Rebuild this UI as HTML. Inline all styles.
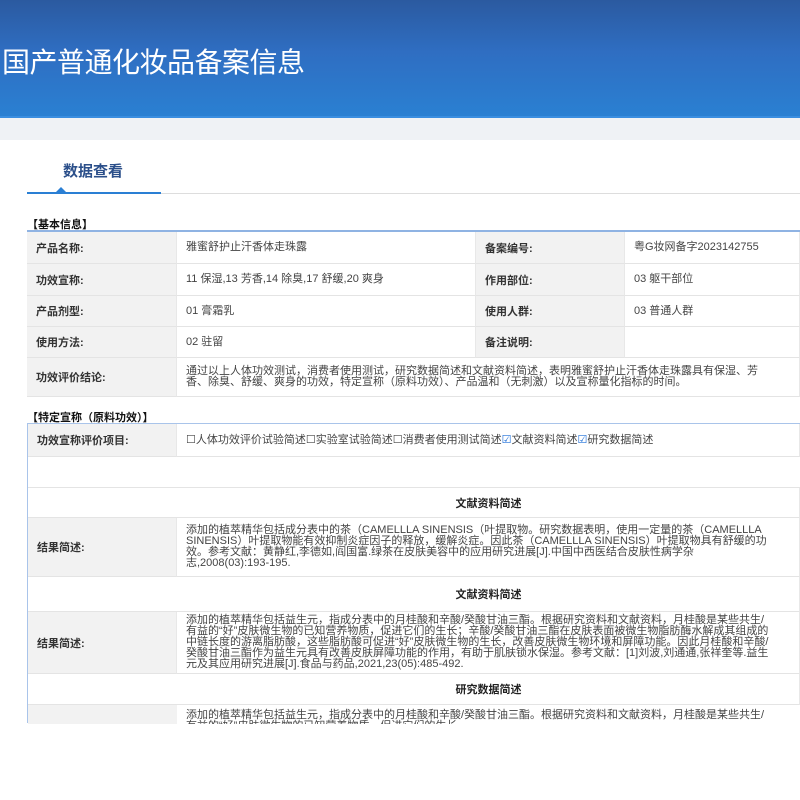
<!DOCTYPE html>
<html><head><meta charset="utf-8"><style>
*{margin:0;padding:0;box-sizing:border-box}
body{width:800px;height:800px;overflow:hidden;background:#fff;font-family:"Liberation Sans","Noto Sans CJK SC",sans-serif;position:relative;color:#333}
.hdr{position:absolute;left:0;top:0;width:800px;height:118px;background:linear-gradient(180deg,#2b5aa0 0%,#2f6ec2 45%,#2a80d2 100%);border-bottom:2px solid #3a8ee0;overflow:hidden}
.hdr h1{position:absolute;left:2px;top:41px;font-size:28px;font-weight:normal;color:#fff;font-family:"Noto Sans CJK SC",sans-serif;letter-spacing:-0.5px}
.band{position:absolute;left:0;top:118px;width:800px;height:22px;background:#eff2f5}
.a{position:absolute}
.tab{left:63px;top:160px;font-size:15px;color:#2b4f8a;font-weight:bold}
.ul1{left:27px;top:192px;width:134px;height:2px;background:#2a7fd4}
.ul2{left:161px;top:193px;width:639px;height:1px;background:#ddd}
.tri{left:56px;top:187px;width:0;height:0;border-left:5px solid transparent;border-right:5px solid transparent;border-bottom:5px solid #2a7fd4}
.sec{font-size:11px;font-weight:bold;color:#111}
.c{position:absolute;font-size:11px;display:flex;align-items:center;border-bottom:1px solid #e4e4e4;border-right:1px solid #e8e8e8}
.l{background:#f2f2f2;font-weight:bold;color:#333;padding-left:9px}
.v{background:#fff;color:#444;padding-left:9px;line-height:11px}
.h{background:#fff;justify-content:center;font-weight:bold;color:#222;padding-left:150px}
</style></head><body>
<div class="hdr"><h1>国产普通化妆品备案信息</h1></div>
<div class="band"></div>
<div class="a tab">数据查看</div>
<div class="a ul2"></div><div class="a ul1"></div><div class="a tri"></div>
<div class="a sec" style="left:27px;top:216px">【基本信息】</div>
<div class="a" style="left:27px;top:230px;width:773px;height:2px;background:#8fb3e3"></div>

<div class="c l" style="left:27px;top:232px;width:150px;height:32px">产品名称:</div>
<div class="c v" style="left:177px;top:232px;width:299px;height:32px">雅蜜舒护止汗香体走珠露</div>
<div class="c l" style="left:476px;top:232px;width:149px;height:32px">备案编号:</div>
<div class="c v" style="left:625px;top:232px;width:175px;height:32px">粤G妆网备字2023142755</div>

<div class="c l" style="left:27px;top:264px;width:150px;height:32px">功效宣称:</div>
<div class="c v" style="left:177px;top:264px;width:299px;height:32px">11 保湿,13 芳香,14 除臭,17 舒缓,20 爽身</div>
<div class="c l" style="left:476px;top:264px;width:149px;height:32px">作用部位:</div>
<div class="c v" style="left:625px;top:264px;width:175px;height:32px">03 躯干部位</div>

<div class="c l" style="left:27px;top:296px;width:150px;height:31px">产品剂型:</div>
<div class="c v" style="left:177px;top:296px;width:299px;height:31px">01 膏霜乳</div>
<div class="c l" style="left:476px;top:296px;width:149px;height:31px">使用人群:</div>
<div class="c v" style="left:625px;top:296px;width:175px;height:31px">03 普通人群</div>

<div class="c l" style="left:27px;top:327px;width:150px;height:31px">使用方法:</div>
<div class="c v" style="left:177px;top:327px;width:299px;height:31px">02 驻留</div>
<div class="c l" style="left:476px;top:327px;width:149px;height:31px">备注说明:</div>
<div class="c v" style="left:625px;top:327px;width:175px;height:31px"></div>

<div class="c l" style="left:27px;top:358px;width:150px;height:39px">功效评价结论:</div>
<div class="c v" style="left:177px;top:358px;width:623px;height:39px;padding-right:30px">通过以上人体功效测试，消费者使用测试，研究数据简述和文献资料简述，表明雅蜜舒护止汗香体走珠露具有保湿、芳香、除臭、舒缓、爽身的功效，特定宣称（原料功效）、产品温和（无刺激）以及宣称量化指标的时间。</div>

<div class="a sec" style="left:27px;top:409px">【特定宣称（原料功效）】</div>
<div class="a" style="left:27px;top:423px;width:773px;height:1px;background:#a9c4ea"></div>
<div class="a" style="left:27px;top:423px;width:1px;height:300px;background:#a9c4ea"></div>

<div class="c l" style="left:28px;top:424px;width:149px;height:33px">功效宣称评价项目:</div>
<div class="c v" style="left:177px;top:424px;width:623px;height:33px">☐人体功效评价试验简述☐实验室试验简述☐消费者使用测试简述<span style="color:#1e6fd9">☑</span>文献资料简述<span style="color:#1e6fd9">☑</span>研究数据简述</div>
<div class="c v" style="left:28px;top:457px;width:772px;height:31px;border-right:none"></div>

<div class="c h" style="left:28px;top:488px;width:772px;height:30px">文献资料简述</div>
<div class="c l" style="left:28px;top:518px;width:149px;height:59px">结果简述:</div>
<div class="c v" style="left:177px;top:518px;width:623px;height:59px;padding-right:30px">添加的植萃精华包括成分表中的茶（CAMELLLA SINENSIS（叶提取物。研究数据表明，使用一定量的茶（CAMELLLA SINENSIS）叶提取物能有效抑制炎症因子的释放，缓解炎症。因此茶（CAMELLLA SINENSIS）叶提取物具有舒缓的功效。参考文献：黄静红,李德如,阎国富.绿茶在皮肤美容中的应用研究进展[J].中国中西医结合皮肤性病学杂志,2008(03):193-195.</div>

<div class="c h" style="left:28px;top:577px;width:772px;height:35px">文献资料简述</div>
<div class="c l" style="left:28px;top:612px;width:149px;height:62px">结果简述:</div>
<div class="c v" style="left:177px;top:612px;width:623px;height:62px;padding-right:30px">添加的植萃精华包括益生元，指成分表中的月桂酸和辛酸/癸酸甘油三酯。根据研究资料和文献资料，月桂酸是某些共生/有益的“好”皮肤微生物的已知营养物质，促进它们的生长；辛酸/癸酸甘油三酯在皮肤表面被微生物脂肪酶水解成其组成的中链长度的游离脂肪酸，这些脂肪酸可促进“好”皮肤微生物的生长，改善皮肤微生物环境和屏障功能。因此月桂酸和辛酸/癸酸甘油三酯作为益生元具有改善皮肤屏障功能的作用，有助于肌肤锁水保湿。参考文献：[1]刘波,刘通通,张祥奎等.益生元及其应用研究进展[J].食品与药品,2021,23(05):485-492.</div>

<div class="c h" style="left:28px;top:674px;width:772px;height:31px">研究数据简述</div>
<div class="a" style="left:28px;top:705px;width:149px;height:19px;background:#f2f2f2"></div>
<div class="a" style="left:177px;top:705px;width:623px;height:19px;overflow:hidden"><div style="font-size:11px;line-height:11px;color:#444;padding:5px 30px 0 9px">添加的植萃精华包括益生元，指成分表中的月桂酸和辛酸/癸酸甘油三酯。根据研究资料和文献资料，月桂酸是某些共生/有益的“好”皮肤微生物的已知营养物质，促进它们的生长</div></div>
</body></html>
